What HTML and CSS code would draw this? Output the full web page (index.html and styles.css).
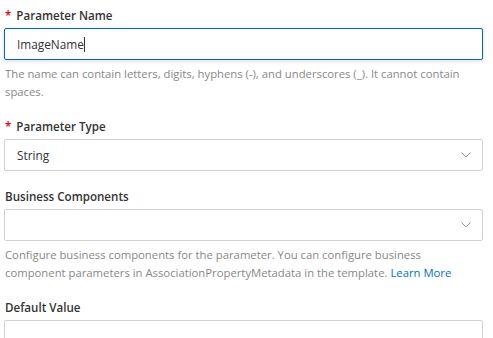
FILE: index.html
```html
<!DOCTYPE html>
<html lang="en">
<head>
    <meta charset="UTF-8">
    <title>Parameter</title>
    <link rel="stylesheet" href="styles.css">
</head>
<body>
    <div class="param-form">
        <div class="form-item">
            <label class="form-label required">Parameter Name</label>
            <div class="field field-focus">
                <span class="field-value">ImageName</span><span class="caret"></span>
            </div>
            <p class="help">The name can contain letters, digits, hyphens (-), and underscores (_). It cannot contain spaces.</p>
        </div>
        <div class="form-item">
            <label class="form-label required">Parameter Type</label>
            <div class="field select">
                <span class="field-value">String</span>
                <svg class="arrow" width="10" height="6" viewBox="0 0 10 6"><path d="M0.5 0.5 L5 5 L9.5 0.5" fill="none" stroke="#999" stroke-width="1"/></svg>
            </div>
        </div>
        <div class="form-item">
            <label class="form-label">Business Components</label>
            <div class="field select">
                <span class="field-value"></span>
                <svg class="arrow" width="10" height="6" viewBox="0 0 10 6"><path d="M0.5 0.5 L5 5 L9.5 0.5" fill="none" stroke="#999" stroke-width="1"/></svg>
            </div>
            <p class="help">Configure business components for the parameter. You can configure business component parameters in AssociationPropertyMetadata in the template. <a href="#">Learn More</a></p>
        </div>
        <div class="form-item">
            <label class="form-label">Default Value</label>
            <div class="field"></div>
        </div>
    </div>
</body>
</html>
```

FILE: styles.css
```css
body {
    margin: 0;
    font-family: 'Open Sans', 'Noto Sans', sans-serif;
    font-size: 11.3px;
    color: #333;
    background-color: #fff;
}
.param-form {
    padding: 6px 10px 0 4px;
}
.form-item {
    margin-bottom: 16px;
}
.form-label {
    display: block;
    height: 20px;
    line-height: 20px;
    margin-bottom: 2px;
    padding-left: 1px;
    font-size: 11.6px;
    font-weight: 600;
    color: #333;
}
.form-label.required::before {
    content: "*";
    color: #e00;
    margin-right: 5px;
}
.field {
    display: flex;
    align-items: center;
    height: 32px;
    box-sizing: border-box;
    padding: 0 12px;
    border: 1px solid #d1d1d1;
    border-radius: 2px;
    background-color: #fff;
    font-size: 11.8px;
}
.field-focus {
    border-color: #0064c8;
    box-shadow: 0 1px 4px rgba(0, 0, 0, 0.15);
}
.field-value {
    color: #333;
}
.caret {
    width: 1px;
    height: 15px;
    background-color: #333;
}
.select {
    justify-content: space-between;
    padding-right: 11px;
}
.help {
    margin: 5px 0 0;
    padding-left: 1px;
    line-height: 18px;
    color: #888;
}
.help a {
    color: #0070cc;
    text-decoration: none;
}
```
